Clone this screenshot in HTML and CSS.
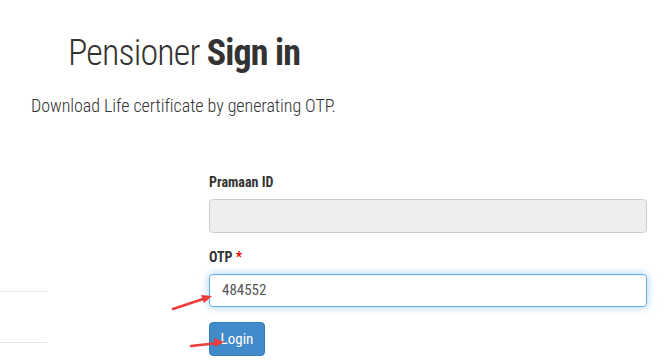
FILE: index.html
```html
<!DOCTYPE html>
<html>
<head>
<meta charset="utf-8">
<link rel="stylesheet" href="styles.css">
</head>
<body>
<div class="page">
  <h1 class="title"><span class="light">Pensioner</span> <span class="strong">Sign in</span></h1>
  <p class="subtitle">Download Life certificate by generating OTP.</p>
  <div class="row">
    <div class="side">
      <div class="side-item"></div>
      <div class="side-item"></div>
    </div>
    <form class="form">
      <label class="label">Pramaan ID</label>
      <div class="input disabled"></div>
      <label class="label">OTP <span class="req">*</span></label>
      <div class="input focus">484552</div>
      <button type="button" class="btn">Login</button>
    </form>
  </div>
  <svg class="arrows" width="664" height="364" viewBox="0 0 664 364">
    <g stroke="#ec3b3b" stroke-width="2.5" fill="none" stroke-linecap="round">
      <line x1="173" y1="309" x2="206" y2="298"/>
      <line x1="191" y1="346" x2="218" y2="343"/>
    </g>
    <g fill="#ec3b3b">
      <polygon points="212,296 201,295 204,303"/>
      <polygon points="224,342 214,338 215,347"/>
    </g>
  </svg>
</div>
</body>
</html>
```
FILE: styles.css
```css
html, body {
  margin: 0;
  padding: 0;
  background: #fff;
}
.page {
  position: relative;
  width: 664px;
  height: 364px;
  overflow: hidden;
  font-family: Roboto, "Noto Sans", sans-serif;
  font-stretch: 75%;
  color: #333;
}
.title {
  margin: 0;
  padding: 32px 0 0 68px;
  font-size: 36px;
  line-height: 42px;
  font-weight: 300;
  letter-spacing: -0.85px;
  color: #333;
}
.title .strong {
  font-weight: 700;
}
.subtitle {
  margin: 0;
  padding: 20px 0 0 31px;
  font-size: 18px;
  line-height: 24px;
  font-weight: 300;
  letter-spacing: -0.05px;
  color: #333;
}
.row {
  display: flex;
  padding-top: 54px;
}
.side {
  width: 47px;
  margin-right: 162px;
  padding-top: 119px;
}
.side-item {
  height: 50px;
  border-top: 1px solid #e5e5e5;
}
.form {
  width: 438px;
  display: flex;
  flex-direction: column;
  margin: 0;
}
.label {
  font-size: 14px;
  font-weight: 700;
  line-height: 20px;
  color: #333;
  margin-bottom: 7px;
}
.req {
  color: #e00;
}
.input {
  box-sizing: border-box;
  height: 34px;
  border: 1px solid #ccc;
  border-radius: 4px;
  padding: 0 12px;
  font-size: 15px;
  line-height: 32px;
  color: #555;
  margin-bottom: 13px;
}
.input.disabled {
  background: #eee;
  margin-bottom: 14px;
}
.input.focus {
  border-color: #66afe9;
  box-shadow: inset 0 1px 1px rgba(0,0,0,.075), 0 0 8px rgba(102,175,233,.6);
  height: 33px;
  line-height: 31px;
  margin-bottom: 15px;
}
.btn {
  align-self: flex-start;
  width: 56px;
  height: 34px;
  border: 1px solid #357ebd;
  border-radius: 4px;
  background: #428bca;
  color: #fff;
  font-family: Roboto, sans-serif;
  font-stretch: 75%;
  font-size: 15px;
  padding: 0;
}
.arrows {
  position: absolute;
  left: 0;
  top: 0;
  pointer-events: none;
}
```
